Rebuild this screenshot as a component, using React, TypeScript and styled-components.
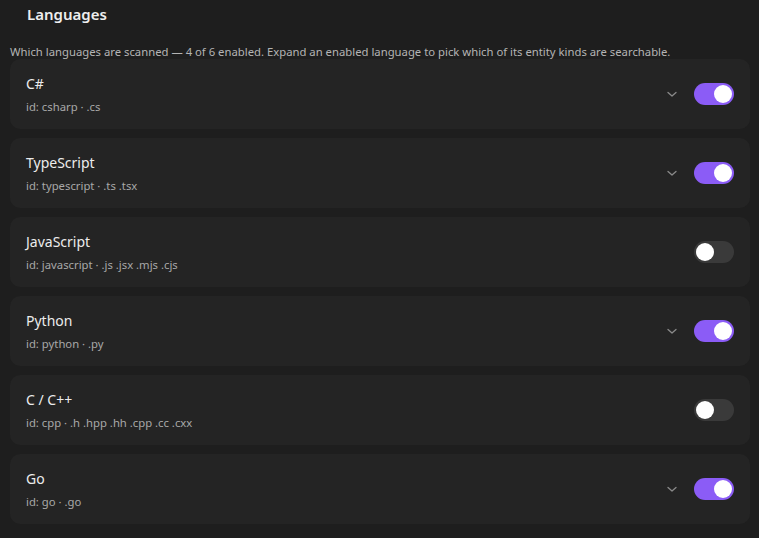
import React, { ReactElement, useState } from 'react'
import styled, { createGlobalStyle } from 'styled-components'

const GlobalStyle = createGlobalStyle`
  html, body {
    margin: 0;
    padding: 0;
    background: #1e1e1e;
  }
  body {
    font-family: "Segoe UI", "Noto Sans", "Open Sans", sans-serif;
    color: #e6e6e6;
  }
`

const Page = styled.div`
  padding: 0 9px 0 10px;
  box-sizing: border-box;
  width: 759px;
`

const Title = styled.h2`
  margin: 0;
  padding: 4px 0 0 17px;
  height: 30px;
  font-size: 15px;
  font-weight: 600;
  color: #eeeeee;
  line-height: 20px;
`

const Description = styled.p`
  margin: 12px 0 0 0;
  font-size: 11.3px;
  line-height: 12px;
  color: #b4b4b4;
  white-space: nowrap;
`

const List = styled.div`
  display: flex;
  flex-direction: column;
  gap: 9px;
  margin-top: 1px;
`

const Card = styled.div`
  height: 70px;
  box-sizing: border-box;
  background: #242424;
  border-radius: 10px;
  padding: 0 16px 0 16px;
  display: flex;
  align-items: center;
`

const Info = styled.div`
  flex: 1;
  display: flex;
  flex-direction: column;
  gap: 6px;
  padding-top: 2px;
`

const Name = styled.div`
  font-size: 14px;
  line-height: 18px;
  color: #ececec;
`

const Meta = styled.div`
  font-size: 11.3px;
  line-height: 16px;
  color: #a8a8a8;
`

const Controls = styled.div`
  display: flex;
  align-items: center;
  gap: 16px;
`

const Chevron = styled.svg`
  width: 12px;
  height: 12px;
  color: #8a8a8a;
`

const ChevronSpace = styled.div`
  width: 12px;
`

const Switch = styled.button<{ $on: boolean }>`
  width: 40px;
  height: 22px;
  border-radius: 11px;
  border: none;
  padding: 0;
  background: ${(p) => (p.$on ? '#8b5cf6' : '#3a3a3a')};
  display: flex;
  align-items: center;
  justify-content: ${(p) => (p.$on ? 'flex-end' : 'flex-start')};
  cursor: pointer;
`

const Knob = styled.span`
  width: 18px;
  height: 18px;
  border-radius: 50%;
  background: #ffffff;
  margin: 0 2px;
`

type Lang = { id: string; name: string; ext: string; enabled: boolean }

const languages: Lang[] = [
  { id: 'csharp', name: 'C#', ext: '.cs', enabled: true },
  { id: 'typescript', name: 'TypeScript', ext: '.ts .tsx', enabled: true },
  { id: 'javascript', name: 'JavaScript', ext: '.js .jsx .mjs .cjs', enabled: false },
  { id: 'python', name: 'Python', ext: '.py', enabled: true },
  { id: 'cpp', name: 'C / C++', ext: '.h .hpp .hh .cpp .cc .cxx', enabled: false },
  { id: 'go', name: 'Go', ext: '.go', enabled: true },
]

const LanguageRow = ({ lang, onToggle }: { lang: Lang; onToggle: () => void }): ReactElement => (
  <Card>
    <Info>
      <Name>{lang.name}</Name>
      <Meta>
        id: {lang.id} · {lang.ext}
      </Meta>
    </Info>
    <Controls>
      {lang.enabled ? (
        <Chevron viewBox="0 0 12 12" fill="none">
          <path d="M2 4.5 L6 8 L10 4.5" stroke="currentColor" strokeWidth="1.3" strokeLinecap="round" strokeLinejoin="round" />
        </Chevron>
      ) : (
        <ChevronSpace />
      )}
      <Switch $on={lang.enabled} onClick={onToggle} aria-label={`Toggle ${lang.name}`}>
        <Knob />
      </Switch>
    </Controls>
  </Card>
)

const App = (): ReactElement => {
  const [langs, setLangs] = useState(languages)
  const enabled = langs.filter((l) => l.enabled).length

  const toggle = (id: string) =>
    setLangs((prev) => prev.map((l) => (l.id === id ? { ...l, enabled: !l.enabled } : l)))

  return (
    <>
      <GlobalStyle />
      <Page>
        <Title>Languages</Title>
        <Description>
          Which languages are scanned — {enabled} of {langs.length} enabled. Expand an enabled language to pick which of
          its entity kinds are searchable.
        </Description>
        <List>
          {langs.map((l) => (
            <LanguageRow key={l.id} lang={l} onToggle={() => toggle(l.id)} />
          ))}
        </List>
      </Page>
    </>
  )
}

export default App
